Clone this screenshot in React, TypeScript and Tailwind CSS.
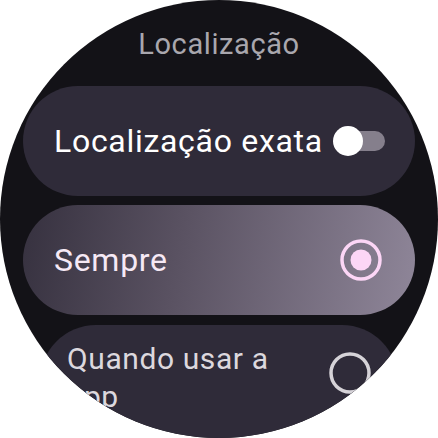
import React from "react";

function Toggle() {
  return (
    <div className="relative w-[52px] h-[30px] shrink-0 flex items-center">
      <div className="absolute left-[12px] right-0 h-[20px] rounded-full bg-[#857f8c]" />
      <div className="absolute left-0 w-[30px] h-[30px] rounded-full bg-white" />
    </div>
  );
}

function Radio({ checked, color }: { checked: boolean; color: string }) {
  return (
    <svg width="42" height="42" viewBox="0 0 42 42" className="shrink-0">
      <circle cx="21" cy="21" r="19" fill="none" stroke={color} strokeWidth="3.5" />
      {checked && <circle cx="21" cy="21" r="10.5" fill={color} />}
    </svg>
  );
}

export default function App() {
  return (
    <div className="w-[438px] h-[438px] bg-white" style={{ fontFamily: "Roboto, 'Noto Sans', sans-serif" }}>
      <div className="w-[438px] h-[438px] rounded-full overflow-hidden bg-[#131217] flex flex-col items-center">
        {/* ─── Title ─── */}
        <div className="pt-[27px] text-[29px] leading-[34px] font-normal text-[#a9a7ae] tracking-[0.6px]">
          Localização
        </div>

        {/* ─── Precise location ─── */}
        <div className="mt-[25px] w-[392px] h-[110px] shrink-0 rounded-full bg-[#2f2b39] flex items-center justify-between pl-[31px] pr-[30px]">
          <span className="text-[32px] leading-[38px] font-normal text-white tracking-[0.7px] whitespace-nowrap">Localização exata</span>
          <Toggle />
        </div>

        {/* ─── Always (selected) ─── */}
        <div className="mt-[9px] w-[392px] h-[110px] shrink-0 rounded-full bg-[linear-gradient(100deg,#36313f_0%,#5a5262_40%,#8f8699_100%)] flex items-center justify-between pl-[31px] pr-[33px]">
          <span className="text-[32px] leading-[38px] font-normal text-[#f6e9f5] tracking-[0.7px]">Sempre</span>
          <Radio checked color="#fcd6f6" />
        </div>

        {/* ─── While using the app ─── */}
        <div className="mt-[10px] w-[358px] h-[140px] shrink-0 rounded-[56px] bg-[#2f2b39] flex items-start justify-between pl-[27px] pr-[27px] pt-[15px]">
          <span className="text-[30px] leading-[38px] font-normal text-[#dcd8de] tracking-[0.6px] w-[230px]">
            Quando usar a app
          </span>
          <div className="mt-[12px]">
            <Radio checked={false} color="#d6d3d8" />
          </div>
        </div>
      </div>
    </div>
  );
}
